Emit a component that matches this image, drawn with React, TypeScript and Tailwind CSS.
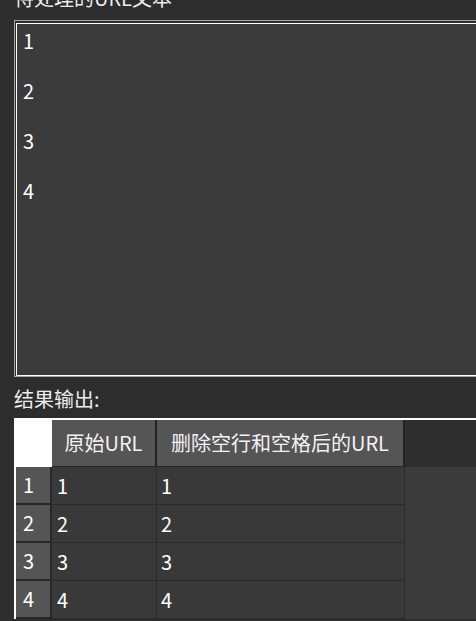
const rows = [
  { id: 1, src: '1', out: '1' },
  { id: 2, src: '2', out: '2' },
  { id: 3, src: '3', out: '3' },
  { id: 4, src: '4', out: '4' },
];

function UrlInput() {
  return (
    <div className="ml-[14px] w-[470px] h-[357px] border border-r-0 border-[#a2a5ab] pt-[2px] pl-[1px]">
      <div className="h-[353px] border border-r-0 border-white bg-[#3b3b3b] pt-[4px] pl-[6px] leading-[25px] text-white">
        <div>1</div>
        <div>&nbsp;</div>
        <div>2</div>
        <div>&nbsp;</div>
        <div>3</div>
        <div>&nbsp;</div>
        <div>4</div>
      </div>
    </div>
  );
}

function ResultTable() {
  return (
    <div className="ml-[14px] w-[470px] border-t-2 border-l-2 border-white bg-[#3b3b3b]">
      <div className="flex h-[47px]">
        <div className="w-[36px] bg-white" />
        <div className="w-[105px] flex items-center justify-center bg-[#555555] border-r-2 border-b border-[#242424] text-[#f2f2f2]">
          原始URL
        </div>
        <div className="w-[248px] flex items-center justify-center bg-[#555555] border-r-2 border-b border-[#242424] text-[#f2f2f2]">
          删除空行和空格后的URL
        </div>
        <div className="flex-1 bg-[#2e2e2e]" />
      </div>
      {rows.map((r) => (
        <div key={r.id} className="flex h-[38px]">
          <div className="w-[36px] flex items-center pl-[7px] bg-[#555555] border-r-2 border-b-2 border-[#282828] text-white">
            {r.id}
          </div>
          <div className="w-[105px] flex items-center pl-[5px] bg-[#393939] border-r border-b border-[#2b2b2b] text-white">
            {r.src}
          </div>
          <div className="w-[248px] flex items-center pl-[4px] bg-[#393939] border-r border-b border-[#2b2b2b] text-white">
            {r.out}
          </div>
          <div className="flex-1" />
        </div>
      ))}
    </div>
  );
}

export default function App() {
  return (
    <div className="w-[476px] h-[621px] overflow-hidden bg-[#2d2d2d] text-[20px] font-['Noto_Sans_CJK_SC',sans-serif]">
      <div className="-mt-[12px] h-[32px] pl-[14px] leading-[20px] text-[#ececec]">待处理的URL文本</div>
      <UrlInput />
      <div className="mt-[12px] h-[29px] pl-[14px] leading-[20px] text-[#ececec]">结果输出:</div>
      <ResultTable />
    </div>
  );
}
